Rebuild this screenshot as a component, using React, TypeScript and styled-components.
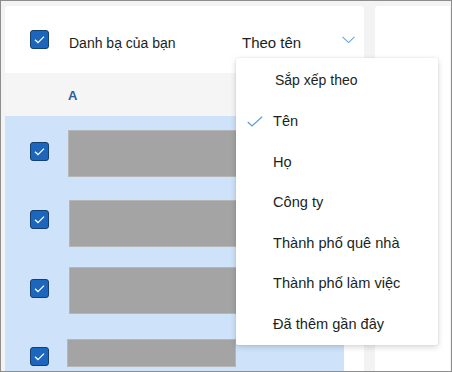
import styled, { createGlobalStyle } from 'styled-components';

const GlobalStyle = createGlobalStyle`
  html, body {
    margin: 0;
    padding: 0;
    background: #ffffff;
  }
  * {
    box-sizing: border-box;
  }
`;

const Frame = styled.div`
  position: relative;
  width: 452px;
  height: 372px;
  overflow: hidden;
  display: flex;
  gap: 11px;
  padding: 5px 1px 0 4px;
  background: #f3f3f3;
  border: 1px solid #8e8e8e;
  font-family: 'Liberation Sans', Arial, sans-serif;
  color: #201f1e;
`;

const Card = styled.div`
  width: 359px;
  flex-shrink: 0;
  display: flex;
  flex-direction: column;
  background: #ffffff;
  border-radius: 3px 3px 0 0;
  overflow: hidden;
`;

const SidePanel = styled.div`
  flex: 1;
  background: #ffffff;
  border-radius: 3px 0 0 0;
`;

const Header = styled.div`
  height: 67px;
  display: flex;
  align-items: center;
  padding-left: 25px;
  padding-right: 9px;
`;

const HeaderTitle = styled.span`
  font-size: 14px;
  margin-left: 20px;
  margin-top: 6px;
  flex: 1;
`;

const SortLabel = styled.span`
  font-size: 15px;
  margin-top: 6px;
  width: 100px;
`;

const GroupBand = styled.div`
  height: 43px;
  display: flex;
  align-items: center;
  padding-left: 63px;
  padding-top: 2px;
  background: #f5f5f5;
  font-size: 13px;
  font-weight: bold;
  color: #2c5c9a;
`;

const ListArea = styled.div`
  flex: 1;
  display: flex;
`;

const SelectedList = styled.div`
  width: 339px;
  background: #cee3f9;
  padding-left: 25px;
`;

const ListGutter = styled.div`
  flex: 1;
  background: #ffffff;
`;

const Row = styled.div<{ $offset: number; $height: number }>`
  display: flex;
  align-items: flex-start;
  gap: 19px;
  margin-top: ${(p) => p.$offset}px;
  height: ${(p) => p.$height}px;
`;

const Placeholder = styled.div<{ $shift: number }>`
  width: 169px;
  height: 100%;
  margin-left: ${(p) => p.$shift}px;
  background: #a4a4a4;
  border: 1px solid #b6b6b6;
`;

const CheckSlot = styled.div<{ $top: number }>`
  margin-top: ${(p) => p.$top}px;
  display: flex;
`;

const Menu = styled.div`
  position: absolute;
  left: 235px;
  top: 57px;
  width: 202px;
  background: #ffffff;
  border-radius: 2px;
  box-shadow: 0 2px 6px rgba(0, 0, 0, 0.16), 0 0 2px rgba(0, 0, 0, 0.1);
  padding-bottom: 1px;
`;

const MenuTitle = styled.div`
  height: 43px;
  display: flex;
  align-items: center;
  padding-left: 39px;
  font-size: 14px;
`;

const MenuItem = styled.div`
  height: 40.5px;
  display: flex;
  align-items: center;
  font-size: 14.6px;
`;

const CheckCell = styled.span`
  width: 37px;
  display: flex;
  justify-content: flex-end;
  padding-right: 10px;
`;

function Checkbox() {
  return (
    <svg width="19" height="19" viewBox="0 0 19 19">
      <rect x="0.5" y="0.5" width="18" height="18" rx="2.5" fill="#1c66bd" stroke="#163f6e" />
      <path d="M5 9.8 L8 12.6 L14 6.6" fill="none" stroke="#ffffff" strokeWidth="1.3" />
    </svg>
  );
}

function Chevron() {
  return (
    <svg width="13" height="8" viewBox="0 0 13 8">
      <path d="M0.5 0.8 L6.5 6.6 L12.5 0.8" fill="none" stroke="#6aa1dc" strokeWidth="1.1" />
    </svg>
  );
}

function MenuCheck() {
  return (
    <svg width="16" height="11" viewBox="0 0 16 11">
      <path d="M0.8 6 L5 10 L15.2 0.8" fill="none" stroke="#5b9bd6" strokeWidth="1.2" />
    </svg>
  );
}

const rows = [
  { offset: 14, height: 47, check: 12, shift: 0 },
  { offset: 23, height: 47, check: 10, shift: 1 },
  { offset: 20, height: 47, check: 12, shift: 1 },
  { offset: 25, height: 28, check: 8, shift: -1 },
];

const sortOptions = [
  'Tên',
  'Họ',
  'Công ty',
  'Thành phố quê nhà',
  'Thành phố làm việc',
  'Đã thêm gần đây',
];

export default function App() {
  return (
    <>
      <GlobalStyle />
      <Frame>
        <Card>
          <Header>
            <Checkbox />
            <HeaderTitle>Danh bạ của bạn</HeaderTitle>
            <SortLabel>Theo tên</SortLabel>
            <Chevron />
          </Header>
          <GroupBand>A</GroupBand>
          <ListArea>
            <SelectedList>
              {rows.map((r, i) => (
                <Row key={i} $offset={r.offset} $height={r.height}>
                  <CheckSlot $top={r.check}>
                    <Checkbox />
                  </CheckSlot>
                  <Placeholder $shift={r.shift} />
                </Row>
              ))}
            </SelectedList>
            <ListGutter />
          </ListArea>
        </Card>
        <SidePanel />
        <Menu>
          <MenuTitle>Sắp xếp theo</MenuTitle>
          {sortOptions.map((opt, i) => (
            <MenuItem key={opt}>
              <CheckCell>{i === 0 ? <MenuCheck /> : null}</CheckCell>
              {opt}
            </MenuItem>
          ))}
        </Menu>
      </Frame>
    </>
  );
}
